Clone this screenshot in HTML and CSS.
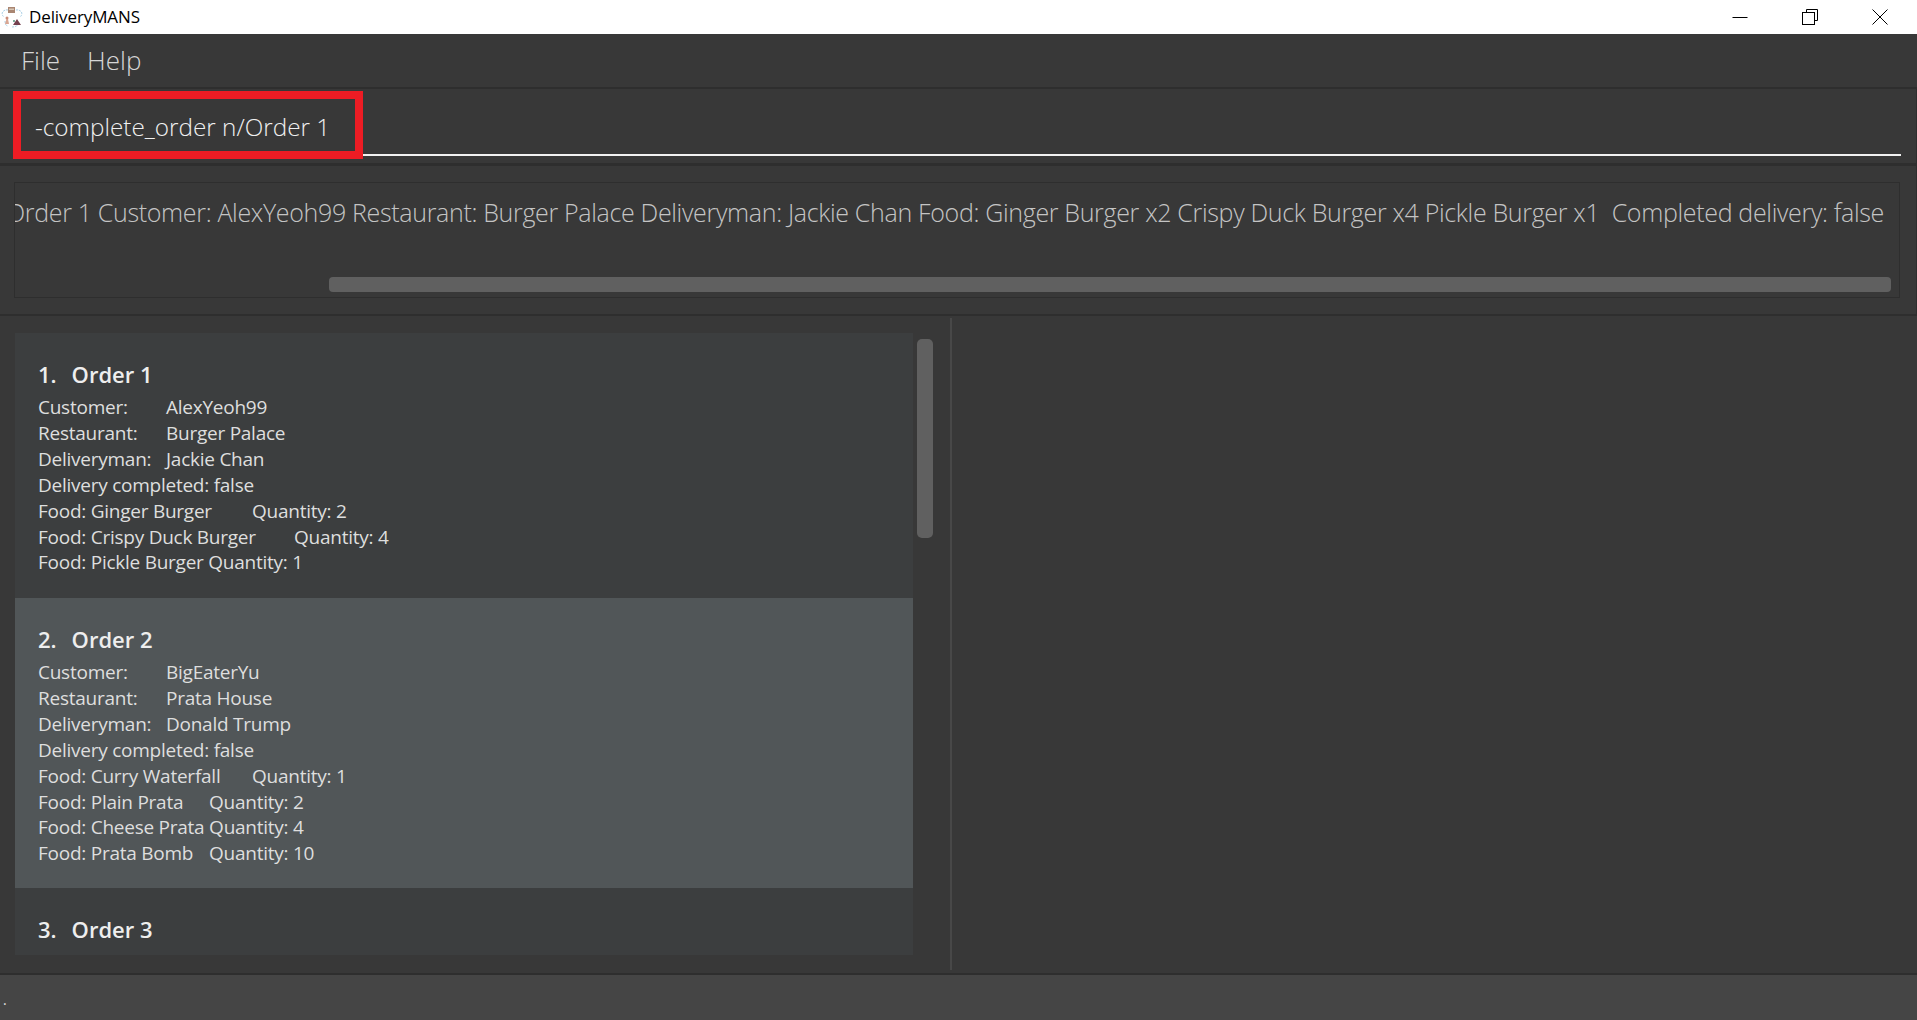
FILE: index.html
```html
<!DOCTYPE html>
<html lang="en">
<head>
    <meta charset="UTF-8">
    <title>DeliveryMANS</title>
    <link rel="stylesheet" href="styles.css">
</head>
<body>

<div class="window">
    <div class="titlebar">
        <div class="title-left">
            <svg class="app-icon" width="22" height="22" viewBox="0 0 22 22">
                <path d="M7 4C2 3 -1 8 3 11M15 4c5-1 8 4 4 7M4 15c0 3 1 5 3 5M11 21c3 0 5-1 7-3" fill="none" stroke="#a9cfe6" stroke-width="1" stroke-dasharray="2 1"/>
                <rect x="7" y="1" width="7" height="6" fill="#a98672"/>
                <rect x="8" y="2.5" width="5" height="1.5" fill="#d8c6b4"/>
                <path d="M4 18l1.500-5 1.500 0 1 5z" fill="#d9a692"/>
                <circle cx="6" cy="12" r="1.500" fill="#c98b78"/>
                <path d="M12 19l4-6 4 6z" fill="#74404e"/>
                <circle cx="13" cy="15" r="1" fill="#4f8f78"/>
            </svg>
            <span class="app-name">DeliveryMANS</span>
        </div>
        <div class="win-buttons">
            <svg width="16" height="16" viewBox="0 0 16 16"><path d="M0.500 8.500h15" stroke="#000" stroke-width="1"/></svg>
            <svg width="16" height="16" viewBox="0 0 16 16" fill="none" stroke="#000" stroke-width="1"><path d="M4.500 3.500v-3h11v11h-3"/><rect x="0.500" y="3.500" width="12" height="12"/></svg>
            <svg width="16" height="16" viewBox="0 0 16 16" fill="none" stroke="#000" stroke-width="1"><path d="M0.500 0.500l15 15M15.500 0.500l-15 15"/></svg>
        </div>
    </div>

    <div class="menubar">
        <span class="menu-item">File</span>
        <span class="menu-item">Help</span>
    </div>

    <div class="command-bar">
        <div class="command-line"></div>
        <div class="command-box">-complete_order n/Order 1</div>
    </div>

    <div class="result-pane">
        <div class="result-box">
            <div class="result-text">Order 1 Customer: AlexYeoh99 Restaurant: Burger Palace Deliveryman: Jackie Chan Food: Ginger Burger x2 Crispy Duck Burger x4 Pickle Burger x1&nbsp; Completed delivery: false</div>
            <div class="h-scroll"></div>
        </div>
    </div>

    <div class="main">
        <div class="list-pane">
            <div class="list">
                <div class="card">
                    <div class="card-title"><b>1.</b><b>Order 1</b></div>
                    <div class="row"><span class="label">Customer:</span>AlexYeoh99</div>
                    <div class="row"><span class="label">Restaurant:</span>Burger Palace</div>
                    <div class="row"><span class="label">Deliveryman:</span>Jackie Chan</div>
                    <div class="row">Delivery completed: false</div>
                    <div class="row"><span class="food f1">Food: Ginger Burger</span>Quantity: 2</div>
                    <div class="row"><span class="food f2">Food: Crispy Duck Burger</span>Quantity: 4</div>
                    <div class="row"><span class="food">Food: Pickle Burger</span> Quantity: 1</div>
                </div>
                <div class="card selected">
                    <div class="card-title"><b>2.</b><b>Order 2</b></div>
                    <div class="row"><span class="label">Customer:</span>BigEaterYu</div>
                    <div class="row"><span class="label">Restaurant:</span>Prata House</div>
                    <div class="row"><span class="label">Deliveryman:</span>Donald Trump</div>
                    <div class="row">Delivery completed: false</div>
                    <div class="row"><span class="food f1">Food: Curry Waterfall</span>Quantity: 1</div>
                    <div class="row"><span class="food f3">Food: Plain Prata</span>Quantity: 2</div>
                    <div class="row"><span class="food">Food: Cheese Prata</span> Quantity: 4</div>
                    <div class="row"><span class="food f3">Food: Prata Bomb</span>Quantity: 10</div>
                </div>
                <div class="card">
                    <div class="card-title"><b>3.</b><b>Order 3</b></div>
                    <div class="row"><span class="label">Customer:</span>LeonardoBlue</div>
                </div>
            </div>
            <div class="v-scroll"></div>
        </div>
        <div class="detail-pane"></div>
    </div>

    <div class="statusbar">.</div>
</div>

</body>
</html>
```

FILE: styles.css
```css
* {
    box-sizing: border-box;
}
html, body {
    margin: 0;
    padding: 0;
    height: 100%;
    overflow: hidden;
}
body {
    font-family: "Open Sans", "Noto Sans", sans-serif;
    background-color: #383838;
}
.window {
    width: 1917px;
    height: 1020px;
    display: flex;
    flex-direction: column;
    background-color: #383838;
}
.titlebar {
    height: 34px;
    flex: none;
    background-color: white;
    display: flex;
    justify-content: space-between;
    align-items: center;
    padding: 0 29px 1px 1px;
}
.title-left {
    display: flex;
    align-items: center;
    gap: 6px;
}
.app-name {
    font-size: 17px;
    letter-spacing: -0.1px;
    color: #000;
}
.win-buttons {
    display: flex;
    gap: 54px;
}
.menubar {
    height: 55px;
    flex: none;
    display: flex;
    align-items: center;
    gap: 27px;
    padding: 0 21px 2px;
    border-bottom: 2px solid #2e2e2e;
}
.menu-item {
    font-size: 26px;
    font-weight: 300;
    color: #d6d6d6;
}
.command-bar {
    height: 77px;
    flex: none;
    position: relative;
    border-bottom: 3px solid #2e2e2e;
    border-right: 1px solid #2e2e2e;
}
.command-line {
    position: absolute;
    left: 13px;
    right: 15px;
    top: 65px;
    height: 2px;
    background-color: #f2f2f2;
}
.command-box {
    position: absolute;
    left: 13px;
    top: 2px;
    width: 350px;
    height: 68px;
    border: 8px solid #ed1c24;
    padding-left: 14px;
    line-height: 56px;
    font-size: 24.300px;
    font-weight: 300;
    color: #f0f0f0;
    background-color: #383838;
    white-space: nowrap;
}
.result-pane {
    height: 150px;
    flex: none;
    padding: 16px 16px 16px 14px;
    border-bottom: 2px solid #2e2e2e;
    border-right: 1px solid #2e2e2e;
}
.result-box {
    height: 100%;
    border: 1px solid #2e2e2e;
    position: relative;
    overflow: hidden;
}
.result-text {
    position: absolute;
    left: -9px;
    top: 12px;
    font-size: 25px;
    font-weight: 300;
    letter-spacing: -0.330px;
    color: #c4c4c4;
    white-space: nowrap;
}
.h-scroll {
    position: absolute;
    left: 314px;
    right: 8px;
    top: 94px;
    height: 15px;
    border-radius: 4px;
    background-color: #606060;
}
.main {
    flex: 1;
    min-height: 0;
    display: flex;
}
.list-pane {
    width: 952px;
    flex: none;
    position: relative;
    padding: 15px 0 0 15px;
    border-right: 2px solid #484848;
    margin: 2px 0 3px;
}
.list {
    width: 898px;
    height: 622px;
    overflow: hidden;
    background-color: #3c3e3f;
}
.v-scroll {
    position: absolute;
    left: 917px;
    top: 21px;
    width: 16px;
    height: 199px;
    border-radius: 5px;
    background-color: #606060;
}
.detail-pane {
    flex: 1;
}
.card {
    padding: 26px 23px 0;
    background-color: #3c3e3f;
    color: #f0f0f0;
}
.card:first-child {
    height: 265px;
}
.card.selected {
    height: 290px;
    background-color: #515658;
}
.card-title {
    display: flex;
    gap: 15px;
    font-size: 22px;
    line-height: 31px;
    margin-bottom: 5px;
    color: #eeeeee;
}
.card-title b {
    font-weight: 600;
}
.row {
    font-size: 19px;
    line-height: 25.900px;
    font-weight: 400;
    letter-spacing: -0.250px;
    white-space: pre;
    color: #dedede;
}
.label {
    display: inline-block;
    width: 128px;
}
.f1 {
    display: inline-block;
    width: 214px;
}
.f2 {
    display: inline-block;
    width: 256px;
}
.f3 {
    display: inline-block;
    width: 171px;
}
.statusbar {
    height: 47px;
    flex: none;
    background-color: #454545;
    border-top: 2px solid #2e2e2e;
    color: #e0e0e0;
    font-size: 14px;
    line-height: 50px;
    padding-left: 3px;
}
```
